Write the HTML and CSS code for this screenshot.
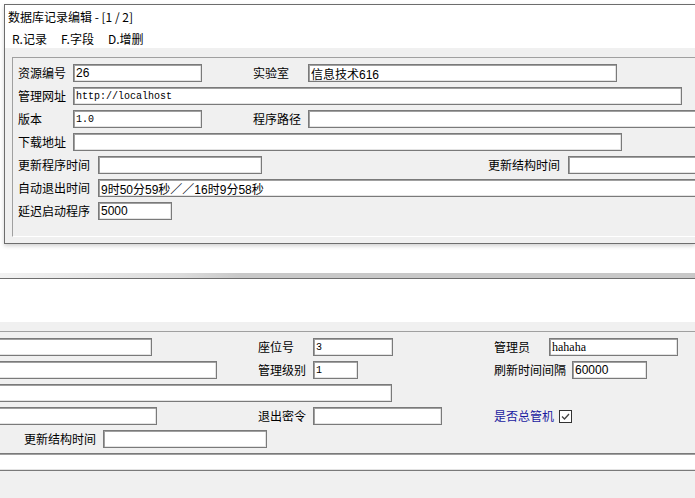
FILE: index.html
```html
<!DOCTYPE html>
<html lang="zh-CN">
<head>
	<meta charset="UTF-8">
	<title>数据库记录编辑</title>
	<link rel="stylesheet" href="styles.css">
</head>
<body>
	<div class="win">
		<div class="title">数据库记录编辑 - [1 / 2]</div>
		<ul class="menu">
			<li>R.记录</li>
			<li>F.字段</li>
			<li>D.增删</li>
		</ul>
		<div class="client">
			<div class="panel">
				<div class="row">
					<span class="lbl">资源编号</span>
					<input class="fld w129" value="26">
					<span class="lbl gap51">实验室</span>
					<input class="fld w309" value="信息技术616">
				</div>
				<div class="row">
					<span class="lbl">管理网址</span>
					<input class="fld mono w609" value="http://localhost">
				</div>
				<div class="row">
					<span class="lbl">版本</span>
					<input class="fld mono w129" value="1.0">
					<span class="lbl gap51">程序路径</span>
					<input class="fld w420" value="">
				</div>
				<div class="row">
					<span class="lbl">下载地址</span>
					<input class="fld w549" value="">
				</div>
				<div class="row">
					<span class="lbl long">更新程序时间</span>
					<input class="fld w164" value="">
					<span class="lbl long gap226">更新结构时间</span>
					<input class="fld w200" value="">
				</div>
				<div class="row">
					<span class="lbl long">自动退出时间</span>
					<input class="fld w620" value="9时50分59秒／／16时9分58秒">
				</div>
				<div class="row">
					<span class="lbl long">延迟启动程序</span>
					<input class="fld w74" value="5000">
				</div>
			</div>
		</div>
	</div>

	<div class="win2">
		<div class="band"></div>
		<div class="head2"></div>
		<div class="client2">
			<div class="panel2">
				<div class="grow">
					<div class="cell"><input class="fld cut w172" value=""></div>
					<div class="cell"><span class="lbl">座位号</span><input class="fld mono w80" value="3"></div>
					<div class="cell"><span class="lbl">管理员</span><input class="fld serif w129" value="hahaha"></div>
				</div>
				<div class="grow">
					<div class="cell"><input class="fld cut w237" value=""></div>
					<div class="cell"><span class="lbl">管理级别</span><input class="fld mono w45" value="1"></div>
					<div class="cell"><span class="lbl w78">刷新时间间隔</span><input class="fld w75" value="60000"></div>
				</div>
				<div class="grow">
					<div class="cell wide"><input class="fld cut w412" value=""></div>
				</div>
				<div class="grow">
					<div class="cell"><input class="fld cut w177" value=""></div>
					<div class="cell"><span class="lbl">退出密令</span><input class="fld w129" value=""></div>
					<div class="cell"><span class="lbl blue">是否总管机</span>
						<span class="chk"><svg width="11" height="11" viewBox="0 0 11 11"><polyline points="2,5.5 4.5,8 9,3" fill="none" stroke="#444" stroke-width="1.3"/></svg></span>
					</div>
				</div>
				<div class="grow">
					<div class="cell wide"><span class="lbl ind">更新结构时间</span><input class="fld w164" value=""></div>
				</div>
				<div class="grow">
					<div class="cell wide"><input class="fld cut w740" value=""></div>
				</div>
			</div>
		</div>
	</div>
</body>
</html>
```

FILE: styles.css
```css
html, body, ul, li{
	margin: 0;
	padding: 0;
}
html{
	overflow: hidden;
}
body{
	width: 695px;
	height: 498px;
	overflow: hidden;
	background: #fff;
	font-family: "Noto Sans CJK SC", "Liberation Sans", sans-serif;
	font-size: 12px;
	color: #000;
}
.win{
	margin: 4px 0 0 4px;
	overflow: hidden;
	border: 1px solid #6d6d6d;
	border-right: 0;
	box-shadow: 0 2px 4px rgba(0,0,0,.18);
}
.title{
	height: 25px;
	line-height: 23px;
	padding-left: 3px;
	background: #fff;
}
.menu{
	display: flex;
	gap: 14px;
	height: 18px;
	line-height: 17px;
	padding-left: 7px;
	list-style: none;
	background: #fff;
}
.client{
	height: 195px;
	box-sizing: border-box;
	padding: 9px 0 0 7px;
	background: #f0f0f0;
}
.panel{
	height: 180px;
	box-sizing: border-box;
	padding: 6px 0 0 5px;
	overflow: hidden;
	border-top: 1px solid #a0a0a0;
	border-left: 1px solid #a0a0a0;
	border-bottom: 1px solid #fff;
}
.row{
	display: flex;
	align-items: center;
	height: 18px;
	margin-bottom: 5px;
	white-space: nowrap;
}
.lbl{
	flex: none;
	width: 55px;
	line-height: 18px;
}
.lbl.long{ width: 80px; }
.lbl.w78{ width: 78px; }
.gap51{ margin-left: 51px; }
.gap226{ margin-left: 226px; }
.fld{
	flex: none;
	box-sizing: border-box;
	height: 18px;
	margin: 0;
	padding: 0 2px;
	border: 1px solid #7a7a7a;
	border-radius: 0;
	box-shadow: inset 1px 1px 0 #a0a0a0, inset -1px -1px 0 #e3e3e3;
	background: #fff;
	font-family: "Liberation Sans", "Noto Sans CJK SC", sans-serif;
	font-size: 12px;
	color: #000;
	outline: none;
}
.fld.mono{
	font-family: "Liberation Mono", monospace;
	font-size: 10px;
}
.fld.serif{
	font-family: "Liberation Serif", serif;
	font-size: 12px;
}
.w45{ width: 45px; }
.w74{ width: 74px; }
.w75{ width: 75px; }
.w80{ width: 80px; }
.w129{ width: 129px; }
.w164{ width: 164px; }
.w172{ width: 172px; }
.w177{ width: 177px; }
.w200{ width: 200px; }
.w237{ width: 237px; }
.w309{ width: 309px; }
.w412{ width: 412px; }
.w420{ width: 420px; }
.w549{ width: 549px; }
.w609{ width: 609px; }
.w620{ width: 620px; }
.w740{ width: 740px; }

/* second window, partly visible */
.win2{
	margin-top: 29px;
	overflow: hidden;
}
.band{
	height: 5px;
	background: linear-gradient(to right, #f2f2f2 0, #dcdcdc 180px, #c8c8c8 240px, #c8c8c8 100%);
	border-bottom: 1px solid #6e6e6e;
}
.head2{
	height: 43px;
	background: #fff;
}
.client2{
	height: 176px;
	box-sizing: border-box;
	padding-top: 9px;
	overflow: hidden;
	background: #f0f0f0;
}
.panel2{
	padding-top: 6px;
	overflow: hidden;
	border-top: 1px solid #a0a0a0;
}
.grow{
	display: grid;
	grid-template-columns: 258px 236px 1fr;
	height: 18px;
	margin-bottom: 5px;
	white-space: nowrap;
}
.cell{
	display: flex;
	align-items: center;
	min-width: 0;
}
.cell.wide{
	grid-column: 1 / 4;
}
.cut{
	margin-left: -20px;
}
.lbl.ind{
	width: 79px;
	margin-left: 24px;
}
.blue{
	width: 65px;
	color: #1a1aa0;
}
.chk{
	display: flex;
	align-items: center;
	justify-content: center;
	width: 13px;
	height: 13px;
	box-sizing: border-box;
	border: 1px solid #333;
	background: #fff;
}
```
